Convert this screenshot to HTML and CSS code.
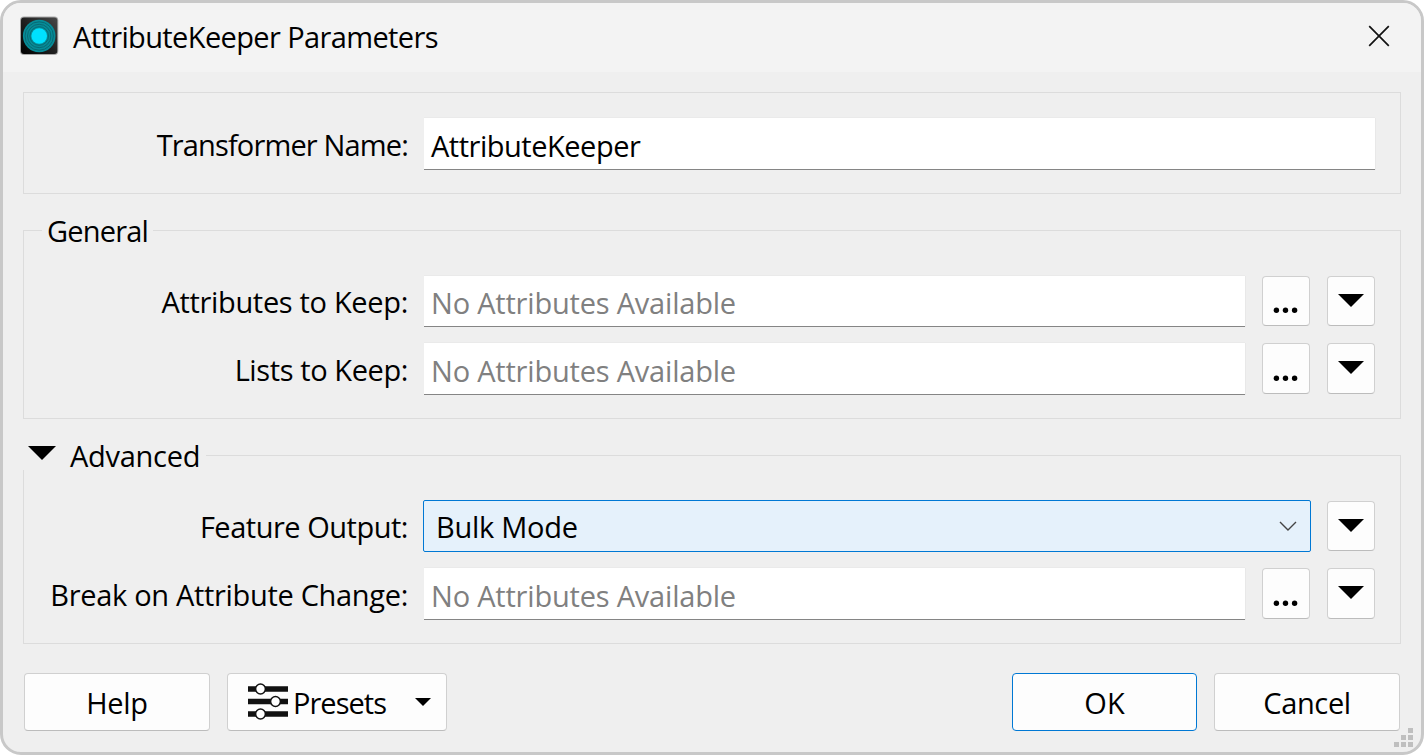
FILE: index.html
```html
<!DOCTYPE html>
<html lang="en">
<head>
<meta charset="utf-8">
<title>AttributeKeeper Parameters</title>
<link rel="stylesheet" href="styles.css">
</head>
<body>
<main class="window">
  <header class="titlebar">
    <svg class="app-icon" width="40" height="40" viewBox="0 0 40 40">
      <defs>
        <linearGradient id="tile" x1="0" y1="1" x2="1" y2="0"><stop offset="0" stop-color="#000"/><stop offset=".5" stop-color="#202020"/><stop offset="1" stop-color="#484848"/></linearGradient>
      </defs>
      <rect x="0" y=".5" width="38.3" height="38.5" rx="4" fill="#a8a8a8"/>
      <rect x="1" y="1.5" width="36.3" height="36.5" rx="3" fill="url(#tile)"/>
      <circle cx="19.2" cy="20" r="16.3" fill="#078b97"/>
      <g fill="none" stroke="#066a75" stroke-width="1"><circle cx="19.2" cy="20" r="14.2"/><circle cx="19.2" cy="20" r="11.7"/><circle cx="19.2" cy="20" r="9.3"/></g>
      <circle cx="19.2" cy="20" r="7.8" fill="#00e1ff"/>
    </svg>
    <h1 class="title"><span class="t-title">AttributeKeeper Parameters</span></h1>
    <svg class="close" width="22" height="22" viewBox="0 0 22 22"><path d="M1.2 1.2 20.8 20.8M20.8 1.2 1.2 20.8" fill="none" stroke="#111" stroke-width="1.7"/></svg>
  </header>

  <div class="content">
    <section class="group name-group">
      <div class="row">
        <label class="label t-name">Transformer Name:</label>
        <div class="field"><span class="t-value">AttributeKeeper</span></div>
      </div>
    </section>

    <section class="group general-group">
      <h2 class="legend t-general">General</h2>
      <div class="row short">
        <label class="label t-attrs">Attributes to Keep:</label>
        <div class="field hint"><span class="t-hint">No Attributes Available</span></div>
        <button class="tool"><svg width="28" height="8" viewBox="0 0 28 8"><g><circle cx="4.4" cy="4.3" r="2.7"/><circle cx="13.5" cy="4.3" r="2.7"/><circle cx="22.6" cy="4.3" r="2.7"/></g></svg></button>
        <button class="tool drop"><svg width="26" height="13" viewBox="0 0 26 13"><path d="M0 0H26L13 13Z"/></svg></button>
      </div>
      <div class="row">
        <label class="label t-lists">Lists to Keep:</label>
        <div class="field hint"><span class="t-hint">No Attributes Available</span></div>
        <button class="tool"><svg width="28" height="8" viewBox="0 0 28 8"><g><circle cx="4.4" cy="4.3" r="2.7"/><circle cx="13.5" cy="4.3" r="2.7"/><circle cx="22.6" cy="4.3" r="2.7"/></g></svg></button>
        <button class="tool drop"><svg width="26" height="13" viewBox="0 0 26 13"><path d="M0 0H26L13 13Z"/></svg></button>
      </div>
    </section>

    <section class="group advanced-group">
      <h2 class="legend collapsible"><svg width="28" height="14" viewBox="0 0 28 14"><path d="M0 0H28L14 14Z"/></svg><span class="t-advanced">Advanced</span></h2>
      <div class="row combo-row">
        <label class="label t-output">Feature Output:</label>
        <div class="combo"><span class="t-bulk">Bulk Mode</span><svg width="18" height="10" viewBox="0 0 18 10"><path d="M1 1 9 9 17 1" fill="none" stroke="#444" stroke-width="1.4"/></svg></div>
        <button class="tool drop"><svg width="26" height="13" viewBox="0 0 26 13"><path d="M0 0H26L13 13Z"/></svg></button>
      </div>
      <div class="row">
        <label class="label t-break">Break on Attribute Change:</label>
        <div class="field hint"><span class="t-hint">No Attributes Available</span></div>
        <button class="tool"><svg width="28" height="8" viewBox="0 0 28 8"><g><circle cx="4.4" cy="4.3" r="2.7"/><circle cx="13.5" cy="4.3" r="2.7"/><circle cx="22.6" cy="4.3" r="2.7"/></g></svg></button>
        <button class="tool drop"><svg width="26" height="13" viewBox="0 0 26 13"><path d="M0 0H26L13 13Z"/></svg></button>
      </div>
    </section>

    <footer class="footer">
      <button class="push"><span class="t-help">Help</span></button>
      <button class="push presets">
        <svg class="sliders" width="40" height="38" viewBox="0 0 40 38">
          <path d="M0 7H40M0 19.5H40M0 32H40" stroke="#111" stroke-width="5.4"/>
          <g fill="#fff" stroke="#111" stroke-width="1.5"><circle cx="12.5" cy="7" r="4.9"/><circle cx="27.5" cy="19.5" r="4.9"/><circle cx="12.5" cy="32" r="4.9"/></g>
        </svg>
        <span class="t-presets">Presets</span>
        <svg class="caret" width="16" height="8" viewBox="0 0 16 8"><path d="M0 0H16L8 8Z"/></svg>
      </button>
      <button class="push ok"><span class="t-ok">OK</span></button>
      <button class="push"><span class="t-cancel">Cancel</span></button>
    </footer>
  </div>
  <svg class="grip" width="19" height="19" viewBox="0 0 19 19"><path d="M14 0h5v5h-5zM7 7h5v5h-5zM14 7h5v5h-5zM0 14h5v5h-5zM7 14h5v5h-5zM14 14h5v5h-5z" fill="#bfbfbf"/></svg>
</main>
</body>
</html>
```
FILE: styles.css
```css
* { box-sizing: border-box; }
body { margin: 0; background: #fff; overflow: hidden; font-family: "Open Sans", "Noto Sans", sans-serif; font-size: 29px; line-height: 40px; color: #000; }
svg { display: block; flex: none; }
h1, h2 { margin: 0; font: inherit; }
button { font: inherit; color: inherit; padding: 0; margin: 0; }
span, label { white-space: nowrap; }

.window { position: relative; width: 1424px; height: 755px; border: 3px solid #c8c8c8; border-radius: 21px; background: #efefef; overflow: hidden; }
.titlebar { display: flex; align-items: flex-start; height: 69px; padding: 13px 31px 0 17px; background: #f3f3f3; }
.title { margin: 1px 0 0 13px; }
.close { margin: 9px 0 0 auto; }

.content { padding: 20px 20px 0; }
.group { position: relative; display: flex; flex-direction: column; gap: 16px; margin-bottom: 36px; border: 1px solid #dcdcdc; padding-right: 25px; }
.name-group { height: 102px; padding-top: 25px; }
.general-group { height: 189px; padding-top: 45px; }
.advanced-group { height: 189px; padding-top: 44px; margin-bottom: 29px; }
.legend { position: absolute; left: 18px; top: -20px; padding: 0 5px; background: #efefef; }
.collapsible { left: -1px; top: -17px; height: 31px; display: flex; gap: 14px; padding: 0 6px 0 5px; line-height: 34px; }
.collapsible svg { margin-top: 7px; }

.row { display: flex; height: 52px; }
.row.short { height: 51px; }
.label { width: 384px; margin-right: 16px; text-align: right; line-height: 54px; }
.field { flex: 1; height: 100%; padding-left: 7px; background: #fff; border-bottom: 1px solid #858585; box-shadow: 0 -1px #eaeaea, 1px 0 #e8e8e8; line-height: 56px; }
.short .label { line-height: 52px; }
.short .field { line-height: 54px; }
.hint { color: #808080; }
.tool { display: flex; justify-content: center; width: 48px; height: calc(100% - 1px); margin-left: 17px; border: 1px solid #d0d0d0; border-bottom-color: #bcbcbc; border-radius: 4px; background: #fdfdfd; padding-top: 30px; }
.short .tool { padding-top: 29px; }
.row .tool.drop { padding-top: 17px; }
.combo { flex: 1; display: flex; justify-content: space-between; height: 52px; margin-left: -1px; margin-right: -1px; padding: 0 13px 0 12px; border: 1px solid #0078d4; border-radius: 2px; background: #e5f1fb; line-height: 52px; }
.combo svg { margin-top: 20px; }
.combo-row .tool { height: 50px; margin-top: 1px; margin-left: 17px; }

.footer { display: flex; padding: 0 1px; height: 58px; }
.push { width: 186px; height: 58px; border: 1px solid #d0d0d0; border-bottom-color: #bcbcbc; border-radius: 4px; background: #fdfdfd; line-height: 58px; text-align: center; }
.presets { width: 220px; margin-left: 17px; display: flex; padding-left: 20px; }
.sliders { margin: 8px 5px 0 0; }
.caret { margin: 24px 15px 0 auto; }
.ok { border-color: #0078d4; margin: 0 17px 0 auto; width: 185px; }
.grip { position: absolute; left: 1391px; top: 725px; }

/* Tracking per caption */
.t-title { letter-spacing: -.62px; }
.t-name { letter-spacing: -.85px; }
.t-value { letter-spacing: -.48px; }
.t-general { letter-spacing: -.8px; }
.t-attrs { letter-spacing: -.32px; }
.t-lists { letter-spacing: -.4px; }
.t-hint { letter-spacing: -.2px; }
.t-advanced, .t-bulk { letter-spacing: -.27px; }
.t-output { letter-spacing: -.48px; }
.t-break { letter-spacing: -.32px; }
.t-presets { letter-spacing: -.98px; }
.t-help { letter-spacing: -.3px; }
.t-cancel { letter-spacing: -.35px; }
```
